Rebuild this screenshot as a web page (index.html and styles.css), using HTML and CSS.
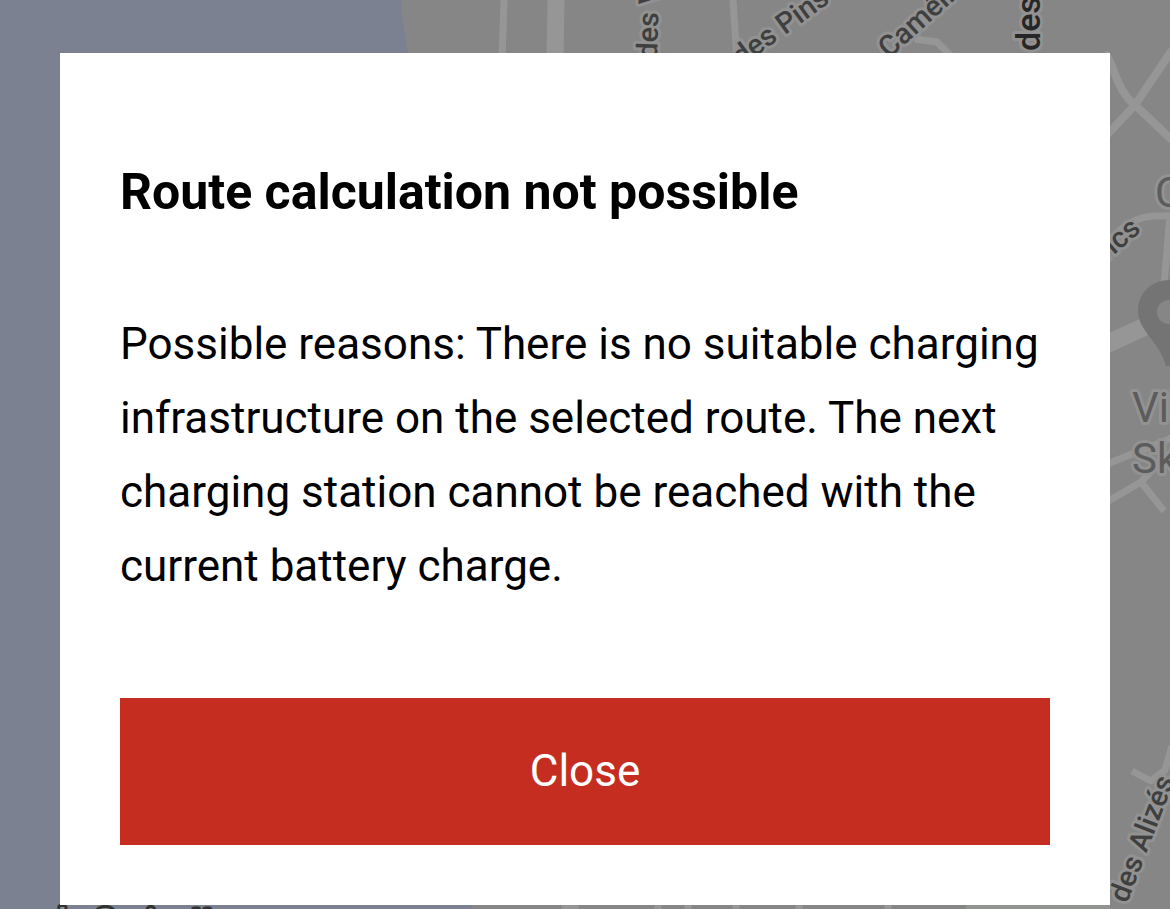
FILE: index.html
```html
<!DOCTYPE html>
<html lang="en">
<head>
    <meta charset="UTF-8">
    <meta name="viewport" content="width=device-width, initial-scale=1.0">
    <title>Route planner</title>
    <link rel="stylesheet" href="styles.css">
</head>
<body>
    <svg class="map" viewBox="0 0 1170 909" preserveAspectRatio="xMinYMin slice" aria-hidden="true">
        <rect class="land" width="1170" height="909"/>
        <!-- sea -->
        <path class="water" d="M0 0H402L401 12L408 53V600L472 860V909H0Z"/>
        <rect class="block" x="966" y="890" width="144" height="19"/>
        <!-- streets -->
        <g class="roads">
            <path stroke-width="7" d="M504 0L502 60M733 0L737 60M658 900V909M688 900V909M736 900V909M799 900V909M888 900V909"/>
            <path stroke-width="17" d="M556 0L555 60M570 900V909"/>
            <path stroke-width="7" d="M915 39L937 42L955 60"/>
            <path stroke-width="8" d="M1105 52L1112 66Q1122 96 1135 105L1172 140M1172 50L1135 105L1105 137"/>
            <path stroke-width="7" d="M1105 245Q1130 216 1155 216H1170M1170 216L1164 285"/>
            <path stroke-width="18" d="M1105 345L1146 326"/>
            <path stroke-width="7" d="M1105 465L1132 454L1172 438M1105 503L1141 482L1164 511M1141 482L1154 468M1132 771L1151 781L1165 770L1172 746"/>
        </g>
        <!-- place pin -->
        <path class="pin" fill-rule="evenodd" d="M1171 280C1150 280 1138 294 1138 311C1138 331 1160 342 1166 366H1176C1182 342 1204 331 1204 311C1204 294 1192 280 1171 280ZM1169 300A12 12 0 1 1 1169 324A12 12 0 1 1 1169 300Z"/>
        <!-- street and place names -->
        <g class="labels">
            <text transform="translate(657 59) rotate(-88)">des Vignes</text>
            <text transform="translate(741 67) rotate(-36)">des Pins</text>
            <text transform="translate(889 59) rotate(-42)">Camélias</text>
            <text class="major" transform="translate(1040 51) rotate(-90)">des</text>
            <text transform="translate(1106 262) rotate(-41)">rics</text>
            <text transform="translate(1127 904) rotate(-69)">des Alizés</text>
            <text class="place" x="1155" y="207">C</text>
            <text class="place" x="1132" y="422">Villa</text>
            <text class="place" x="1132" y="473">Sky</text>
            <text class="city" x="58" y="932">la Croisette</text>
        </g>
    </svg>

    <main class="overlay">
        <div class="dialog" role="alertdialog" aria-labelledby="dialogTitle" aria-describedby="dialogText">
            <h1 id="dialogTitle">Route calculation not possible</h1>
            <p id="dialogText">Possible reasons: There is no suitable charging infrastructure on the selected route. The next charging station cannot be reached with the current battery charge.</p>
            <button type="button" class="btn">Close</button>
        </div>
    </main>
</body>
</html>
```
FILE: styles.css
```css
* {
    margin: 0;
    padding: 0;
    box-sizing: border-box;
}

body {
    font-family: Roboto, sans-serif;
    background: #868686;
    color: #000;
}

.map {
    position: fixed;
    inset: 0;
    width: 100%;
    height: 100%;
}

.land {
    fill: #868686;
}

.water {
    fill: #7b8191;
}

.block {
    fill: #929492;
}

.roads {
    fill: none;
    stroke: #969696;
    stroke-linejoin: round;
}

.pin {
    fill: #747474;
}

.labels {
    font-size: 29px;
    font-weight: 500;
    fill: #3f3f3f;
    stroke: #929292;
    stroke-width: 6px;
    stroke-linejoin: round;
    paint-order: stroke;
}

.labels .major {
    font-size: 34px;
    fill: #262626;
}

.labels .place {
    font-size: 42px;
    font-weight: 400;
    fill: #5c5c5c;
}

.labels .city {
    font-size: 34px;
    fill: #929492;
    stroke: #303332;
}

.overlay {
    position: relative;
    padding: 53px 60px 4px;
}

.dialog {
    background: white;
    padding: 100px 60px 60px;
}

h1 {
    font-size: 50px;
    font-weight: 700;
    line-height: 78px;
    margin-bottom: 76px;
}

p {
    font-size: 44px;
    line-height: 74px;
    margin-bottom: 95px;
}

.btn {
    display: block;
    width: 100%;
    padding: 36px;
    background: #c42d20;
    color: white;
    border: none;
    font-family: inherit;
    font-size: 44px;
    line-height: 75px;
    cursor: pointer;
}

.btn:hover {
    background: #a8251a;
}
```
